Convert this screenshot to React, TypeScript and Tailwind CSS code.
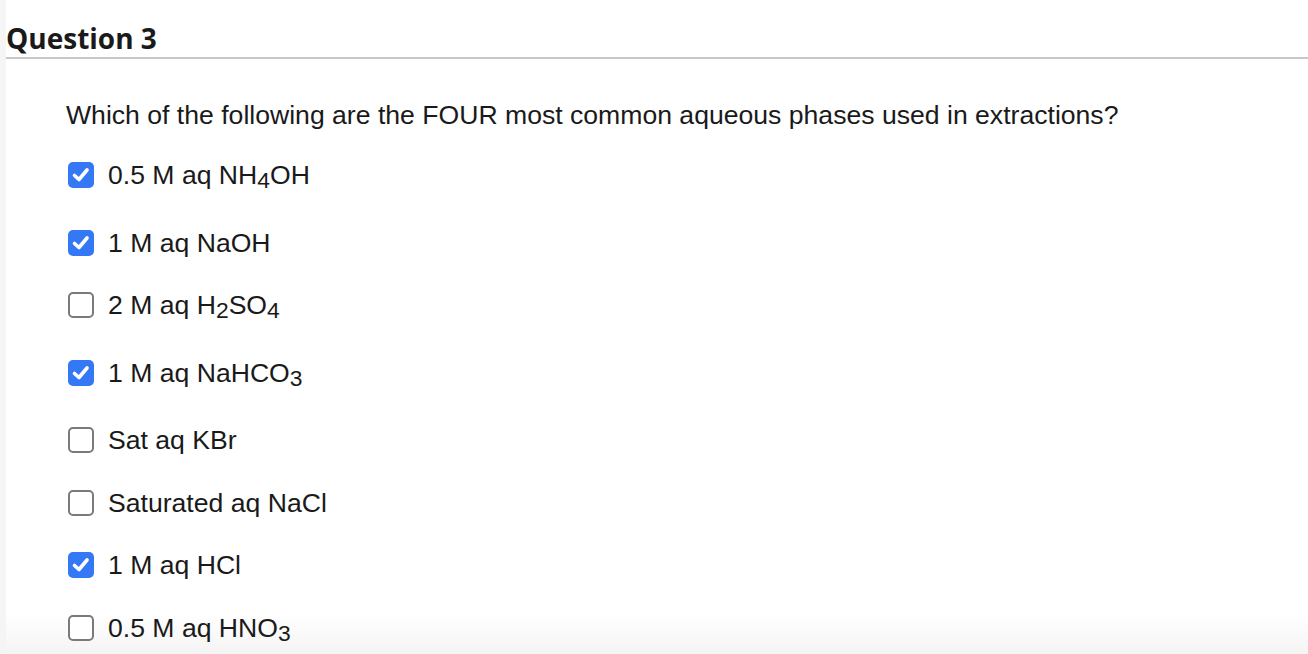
const Sub = ({ children }: { children: string }) => (
  <span className="text-[0.86em] align-[-4px]">{children}</span>
);

const options = [
  { label: <>0.5 M aq NH<Sub>4</Sub>OH</>, checked: true },
  { label: <>1 M aq NaOH</>, checked: true },
  { label: <>2 M aq H<Sub>2</Sub>SO<Sub>4</Sub></>, checked: false },
  { label: <>1 M aq NaHCO<Sub>3</Sub></>, checked: true },
  { label: <>Sat aq KBr</>, checked: false },
  { label: <>Saturated aq NaCl</>, checked: false },
  { label: <>1 M aq HCl</>, checked: true },
  { label: <>0.5 M aq HNO<Sub>3</Sub></>, checked: false },
];

const Box = ({ checked }: { checked: boolean }) =>
  checked ? (
    <span className="mt-[5px] w-[26px] h-[26px] rounded-[5px] bg-[#3478f6] flex items-center justify-center shrink-0">
      <svg width="22" height="22" viewBox="0 0 22 22" fill="none">
        <path d="M4.5 11.5 L9 15.5 L17 6" stroke="white" strokeWidth="3.6" strokeLinecap="round" strokeLinejoin="round" />
      </svg>
    </span>
  ) : (
    <span className="mt-[5px] w-[26px] h-[26px] rounded-[5px] border-2 border-[#7a7a7a] bg-white shrink-0" />
  );

export default function App() {
  return (
    <div className="w-[1308px] h-[654px] flex bg-white overflow-hidden">
      <div className="w-[6px] bg-[#f5f5f5]" />
      <div className="flex-1 relative">
        <div className="absolute left-0 right-0 bottom-0 h-[40px] bg-gradient-to-b from-white to-[#f4f4f4]" />
        <div className="relative">
          <div className="h-[59px] border-b-2 border-[#c8c8c8] pt-[18px]">
            <h2 className="text-[28px] font-bold text-[#1a1a1a] leading-[40px]" style={{ fontFamily: '"Open Sans", sans-serif' }}>
              Question 3
            </h2>
          </div>
          <div className="pl-[60px] pt-[38px]" style={{ fontFamily: '"Liberation Sans", Arial, sans-serif' }}>
            <p className="text-[26.6px] text-[#1a1a1a] leading-[36px]">
              Which of the following are the FOUR most common aqueous phases used in extractions?
            </p>
            <div className="flex flex-col gap-[26.5px] mt-[24px]">
              {options.map((o, i) => (
                <div key={i} className="flex items-start gap-[14px] pl-[2px]">
                  <Box checked={o.checked} />
                  <span className="text-[26.6px] text-[#1a1a1a] leading-[36px] whitespace-nowrap">{o.label}</span>
                </div>
              ))}
            </div>
          </div>
        </div>
      </div>
    </div>
  );
}
